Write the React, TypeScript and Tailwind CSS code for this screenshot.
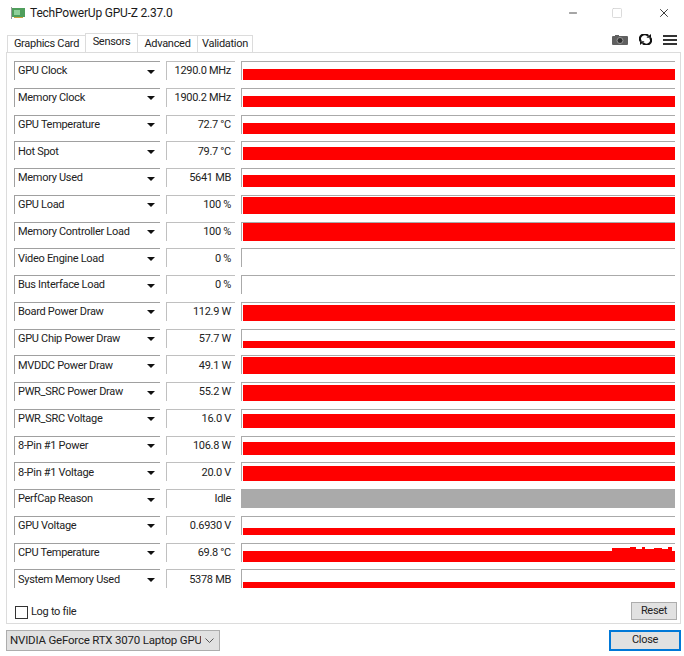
import { Minus, Square, X } from 'lucide-react';

type Sensor = { name: string; value: string; fill: number; idle?: boolean };

const sensors: Sensor[] = [
  { name: 'GPU Clock', value: '1290.0 MHz', fill: 11 },
  { name: 'Memory Clock', value: '1900.2 MHz', fill: 11 },
  { name: 'GPU Temperature', value: '72.7 °C', fill: 11 },
  { name: 'Hot Spot', value: '79.7 °C', fill: 13 },
  { name: 'Memory Used', value: '5641 MB', fill: 12 },
  { name: 'GPU Load', value: '100 %', fill: 17 },
  { name: 'Memory Controller Load', value: '100 %', fill: 18 },
  { name: 'Video Engine Load', value: '0 %', fill: 0 },
  { name: 'Bus Interface Load', value: '0 %', fill: 0 },
  { name: 'Board Power Draw', value: '112.9 W', fill: 16 },
  { name: 'GPU Chip Power Draw', value: '57.7 W', fill: 7 },
  { name: 'MVDDC Power Draw', value: '49.1 W', fill: 17 },
  { name: 'PWR_SRC Power Draw', value: '55.2 W', fill: 16 },
  { name: 'PWR_SRC Voltage', value: '16.0 V', fill: 14 },
  { name: '8-Pin #1 Power', value: '106.8 W', fill: 13 },
  { name: '8-Pin #1 Voltage', value: '20.0 V', fill: 15 },
  { name: 'PerfCap Reason', value: 'Idle', fill: 0, idle: true },
  { name: 'GPU Voltage', value: '0.6930 V', fill: 7 },
  { name: 'CPU Temperature', value: '69.8 °C', fill: 11 },
  { name: 'System Memory Used', value: '5378 MB', fill: 6 },
];

function SensorRow({ sensor }: { sensor: Sensor }) {
  return (
    <div className="flex h-[19px] gap-[6px]">
      <div className="flex w-[146px] shrink-0 items-center justify-between border-t border-l border-[#a0a0a0] pt-[1px] pr-[5px] pl-[3px]">
        <span className="whitespace-nowrap">{sensor.name}</span>
        <span className="h-0 w-0 border-x-[4px] border-t-[4px] border-x-transparent border-t-[#111]" />
      </div>
      <div className="flex w-[69px] shrink-0 items-center justify-end border-t border-l border-[#c0c0c0] pt-[1px] pr-[4px]">
        {sensor.value}
      </div>
      {sensor.idle ? (
        <div className="w-[434px] shrink-0 bg-[#aaaaaa]" />
      ) : (
        <div className="relative flex w-[434px] shrink-0 items-end border-t border-l border-[#aaaaaa] pl-[1px]">
          <div className="w-full bg-[#ff0000]" style={{ height: sensor.fill }} />
          {sensor.name === 'CPU Temperature' && (
            <svg className="absolute top-[3px] right-[3px]" width="60" height="4" viewBox="0 0 60 4">
              <path d="M0 4V1H18V0H24V2H30V0H33V2H42V1H50V2H56V0H60V4Z" fill="#ff0000" />
            </svg>
          )}
          {sensor.name === 'MVDDC Power Draw' && (
            <svg className="absolute top-0 left-[97px]" width="296" height="1" viewBox="0 0 296 1" fill="#ffffff">
              <rect x="0" width="2" height="1" />
              <rect x="219" width="2" height="1" />
              <rect x="224" width="2" height="1" />
              <rect x="267" width="2" height="1" />
              <rect x="279" width="2" height="1" />
              <rect x="294" width="2" height="1" />
            </svg>
          )}
        </div>
      )}
    </div>
  );
}

export default function App() {
  return (
    <div className="flex h-[656px] w-[684px] flex-col overflow-hidden bg-white font-['Roboto',sans-serif] text-[11px] tracking-[-0.3px] text-[#222]">
      {/* title bar */}
      <div className="flex h-[25px] items-center pl-[11px]">
        <svg width="15" height="13" viewBox="0 0 15 13">
          <rect x="0" y="1" width="1" height="12" fill="#9a9a9a" />
          <rect x="1" y="2" width="13" height="9" fill="#4f9e5c" />
          <rect x="3" y="4" width="6" height="5" fill="#8fd09a" />
          <rect x="3" y="11" width="9" height="1" fill="#c8a23c" />
        </svg>
        <span className="ml-[4px] text-[12px] tracking-[-0.2px] whitespace-nowrap text-[#1a1a1a]">TechPowerUp GPU-Z 2.37.0</span>
        <Minus className="ml-auto h-[12px] w-[12px] text-[#111]" strokeWidth={1.5} />
        <Square className="ml-[32px] h-[12px] w-[12px] text-[#cfcfcf]" strokeWidth={1.5} />
        <X className="mr-[13px] ml-[34px] h-[14px] w-[14px] text-[#111]" strokeWidth={1.4} />
      </div>

      {/* tabs */}
      <div className="relative z-10 mt-[8px] flex h-[19px] items-end pl-[7px]">
        <div className="flex h-[17px] w-[78px] items-center justify-center border-t border-l border-[#dcdcdc] pt-[1px]">Graphics Card</div>
        <div className="flex h-[19px] w-[53px] items-center justify-center border-x border-t border-[#dcdcdc] bg-white pb-[2px]">Sensors</div>
        <div className="flex h-[17px] w-[59px] items-center justify-center border-t border-[#dcdcdc] pt-[1px]">Advanced</div>
        <div className="flex h-[17px] w-[56px] items-center justify-center border-x border-t border-[#dcdcdc] pt-[1px]">Validation</div>
        <div className="absolute top-[1px] right-[7px] flex items-center gap-[11px]">
          <svg width="16" height="10" viewBox="0 0 16 10">
            <rect x="0" y="1" width="16" height="9" rx="1" fill="#606060" />
            <rect x="3" y="0" width="4" height="2" fill="#606060" />
            <circle cx="8" cy="5.5" r="3" fill="#333" stroke="#999" />
          </svg>
          <svg width="13" height="11" viewBox="0 0 14 12" fill="none" stroke="#111" strokeWidth="2.4">
            <path d="M2 8A5 4.5 0 0 1 10 2.2" />
            <path d="M12 4A5 4.5 0 0 1 4 9.8" />
            <path d="M8 4H13V0Z" fill="#111" stroke="none" />
            <path d="M6 8H1V12Z" fill="#111" stroke="none" />
          </svg>
          <svg width="14" height="10" viewBox="0 0 14 10" fill="#333">
            <rect y="0" width="14" height="2" />
            <rect y="4" width="14" height="2" />
            <rect y="8" width="14" height="2" />
          </svg>
        </div>
      </div>

      {/* sensors panel */}
      <div className="mx-[3px] ml-[6px] flex h-[572px] flex-col border border-[#dcdcdc] pt-[8px] pl-[7px]">
        <div className="flex flex-col gap-[7.76px]">
          {sensors.map((sensor) => (
            <SensorRow key={sensor.name} sensor={sensor} />
          ))}
        </div>
        <div className="mt-[14px] flex items-start justify-between">
          <label className="mt-[2px] ml-[1px] flex items-center gap-[3px]">
            <span className="h-[13px] w-[13px] border border-[#333] bg-white" />
            Log to file
          </label>
          <button className="mr-[3px] h-[18px] w-[46px] border border-[#adadad] bg-[#e1e1e1]">Reset</button>
        </div>
      </div>

      {/* footer */}
      <div className="mt-[6px] flex items-start justify-between pr-[3px] pl-[6px]">
        <div className="flex h-[21px] w-[214px] items-center border border-[#adadad] bg-[#e1e1e1] pr-[5px] pl-[3px]">
          <span className="w-[191px] overflow-hidden text-[11.5px] tracking-[-0.2px] whitespace-nowrap">NVIDIA GeForce RTX 3070 Laptop GPU</span>
          <svg className="ml-auto" width="9" height="5" viewBox="0 0 9 5" fill="none" stroke="#555">
            <path d="M0.5 0.5L4.5 4.5L8.5 0.5" />
          </svg>
        </div>
        <button className="h-[21px] w-[72px] border-2 border-[#0078d7] bg-[#e1e1e1]">Close</button>
      </div>
    </div>
  );
}
